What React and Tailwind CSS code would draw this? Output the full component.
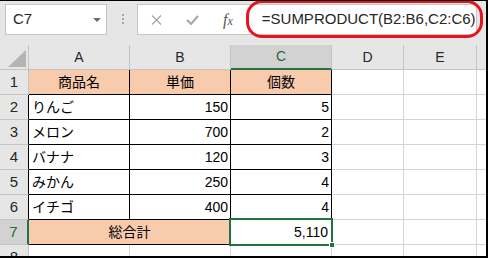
import React from "react";

const F = "font-['Liberation_Sans','Noto_Sans_CJK_JP',sans-serif]";

const rows = [
  ["りんご", "150", "5"],
  ["メロン", "700", "2"],
  ["バナナ", "120", "3"],
  ["みかん", "250", "4"],
  ["イチゴ", "400", "4"],
];

function ColHdr({ children }) {
  return (
    <div className="h-[25px] bg-[#e6e6e6] border-r border-b border-[#c4c4c4] flex items-center justify-center text-[14px] text-[#262626]">
      {children}
    </div>
  );
}

function RowHdr({ children, dark }) {
  return (
    <div
      className={
        dark
          ? "h-[25px] bg-[#e6e6e6] border-r border-r-black border-b border-b-[#c4c4c4] flex items-center justify-center text-[15px] text-[#262626]"
          : "h-[25px] bg-[#e6e6e6] border-r border-r-[#c4c4c4] border-b border-b-[#c4c4c4] flex items-center justify-center text-[15px] text-[#262626]"
      }
    >
      {children}
    </div>
  );
}

function Plain() {
  return <div className="h-[25px] bg-white border-r border-b border-[#d4d4d4]" />;
}

function PlainEnd() {
  return <div className="h-[25px] bg-white border-b border-[#d4d4d4]" />;
}

export default function App() {
  return (
    <div
      className={`${F} relative w-[488px] h-[258px] overflow-hidden bg-[#e6e6e6] border-t border-t-black border-r-2 border-r-black border-b-2 border-b-black`}
    >
      {/* toolbar */}
      <div className="h-[44px] flex items-start pt-[3px] pl-[5px]">
        <div className="w-[102px] h-[31px] bg-white border border-[#c6c6c6] flex items-center justify-between pl-[7px] pr-[5px]">
          <span className="text-[15px] text-[#262626]">C7</span>
          <svg width="8" height="4" viewBox="0 0 8 4">
            <polygon points="0,0 8,0 4,4" fill="#6d6d6d" />
          </svg>
        </div>
        <div className="ml-[15px] mt-[10px] w-[2px] flex flex-col gap-[2px]">
          <div className="w-[2px] h-[2px] bg-[#a8a8a8]" />
          <div className="w-[2px] h-[2px] bg-[#a8a8a8]" />
          <div className="w-[2px] h-[2px] bg-[#a8a8a8]" />
        </div>
        <div className="ml-[13px] w-[340px] h-[31px] bg-white border border-[#c6c6c6] flex items-center">
          <svg className="ml-[13px]" width="11" height="10" viewBox="0 0 11 10">
            <path d="M1 0.5 L10 9.5 M10 0.5 L1 9.5" stroke="#a6a6a6" strokeWidth="1.3" fill="none" />
          </svg>
          <svg className="ml-[24px]" width="13" height="10" viewBox="0 0 13 10">
            <polyline points="1,5 5,9 12,1" stroke="#a6a6a6" strokeWidth="2" fill="none" />
          </svg>
          <span className="ml-[24px] font-['Liberation_Serif',serif] italic text-[16px] leading-none text-[#555555]">
            f<span className="text-[12px]">x</span>
          </span>
          <span className="ml-[29px] text-[15px] text-[#262626] whitespace-nowrap">
            =SUMPRODUCT(B2:B6,C2:C6)
          </span>
        </div>
      </div>

      {/* grid */}
      <div className="grid grid-cols-[29px_101px_101px_101px_72px_73px_1fr]">
        {/* header row */}
        <div className="h-[25px] bg-[#e6e6e6] border-r border-b border-[#c4c4c4] flex items-end justify-end pr-[2px] pb-[2px]">
          <svg width="18" height="17" viewBox="0 0 18 17">
            <polygon points="0,17 18,17 18,0" fill="#b4b4b4" />
          </svg>
        </div>
        <ColHdr>A</ColHdr>
        <ColHdr>B</ColHdr>
        <div className="h-[25px] bg-[#d2d2d2] border-r border-r-[#c4c4c4] border-b-2 border-b-[#217346] flex items-center justify-center text-[14px] text-[#1d6b40]">
          C
        </div>
        <ColHdr>D</ColHdr>
        <ColHdr>E</ColHdr>
        <div className="h-[25px] bg-[#e6e6e6] border-b border-[#c4c4c4]" />

        {/* row 1 */}
        <RowHdr>1</RowHdr>
        <div className="h-[25px] bg-[#f8cbad] border-r border-b border-black flex items-center justify-center text-[14px] text-black">商品名</div>
        <div className="h-[25px] bg-[#f8cbad] border-r border-b border-black flex items-center justify-center text-[14px] text-black">単価</div>
        <div className="h-[25px] bg-[#f8cbad] border-r border-b border-black flex items-center justify-center text-[14px] text-black">個数</div>
        <Plain />
        <Plain />
        <PlainEnd />

        {rows.map((r, i) => (
          <React.Fragment key={i}>
            <RowHdr dark>{i + 2}</RowHdr>
            <div className="h-[25px] bg-white border-r border-b border-black flex items-center pl-[3px] text-[14px] text-black">{r[0]}</div>
            <div className="h-[25px] bg-white border-r border-b border-black flex items-center justify-end pr-[2px] text-[14px] text-black">{r[1]}</div>
            <div className="h-[25px] bg-white border-r border-b border-black flex items-center justify-end pr-[2px] text-[14px] text-black">{r[2]}</div>
            <Plain />
            <Plain />
            <PlainEnd />
          </React.Fragment>
        ))}

        {/* row 7 */}
        <div className="h-[25px] bg-[#d2d2d2] border-r-2 border-r-[#217346] border-b border-b-[#c4c4c4] flex items-center justify-center text-[15px] text-[#1d6b40]">
          7
        </div>
        <div className="col-span-2 h-[25px] bg-[#f8cbad] border-r border-b border-black flex items-center justify-center text-[14px] text-black">
          総合計
        </div>
        <div className="relative h-[25px] bg-white border-r border-b border-black flex items-center justify-end pr-[3px] text-[14px] text-black">
          5,110
          <div className="absolute inset-[-2px] border-2 border-[#217346] z-10">
            <div className="absolute right-[-4px] bottom-[-4px] w-[6px] h-[6px] bg-[#217346] border border-white" />
          </div>
        </div>
        <Plain />
        <Plain />
        <PlainEnd />

        {/* row 8 */}
        <RowHdr>8</RowHdr>
        <Plain />
        <Plain />
        <Plain />
        <Plain />
        <Plain />
        <PlainEnd />
      </div>

      {/* red annotation oval */}
      <div className="absolute top-[-1px] left-[246px] w-[237px] h-[38px] border-[3px] border-[#e8131c] rounded-[16px] pointer-events-none" />
    </div>
  );
}
